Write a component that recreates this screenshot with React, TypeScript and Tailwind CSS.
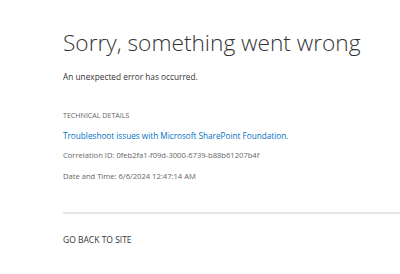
export default function App() {
  return (
    <div className="w-[400px] h-[274px] overflow-hidden bg-white pl-[63px] pt-[27px]" style={{ fontFamily: '"Open Sans", "Noto Sans", sans-serif' }}>
      <h1 className="text-[22.7px] leading-[32px] font-light text-[#333333] whitespace-nowrap">Sorry, something went wrong</h1>
      <p className="mt-[12px] text-[8.3px] leading-[12px] text-[#333333] whitespace-nowrap">An unexpected error has occurred.</p>
      <div className="mt-[27px] text-[7.1px] leading-[10px] text-[#666666] whitespace-nowrap">TECHNICAL DETAILS</div>
      <div className="mt-[10px] text-[8.2px] leading-[12px] text-[#0072c6] whitespace-nowrap">Troubleshoot issues with Microsoft SharePoint Foundation.</div>
      <div className="mt-[7px] text-[7.6px] leading-[12px] text-[#666666] whitespace-nowrap">Correlation ID: 0feb2fa1-f09d-3000-6739-b88b61207b4f</div>
      <div className="mt-[9px] text-[7.6px] leading-[12px] text-[#666666] whitespace-nowrap">Date and Time: 6/6/2024 12:47:14 AM</div>
      <div className="mt-[30px] h-[2px] bg-[#e6e6e6]" />
      <div className="mt-[20px] text-[8.5px] leading-[12px] text-[#333333] whitespace-nowrap">GO BACK TO SITE</div>
    </div>
  );
}
